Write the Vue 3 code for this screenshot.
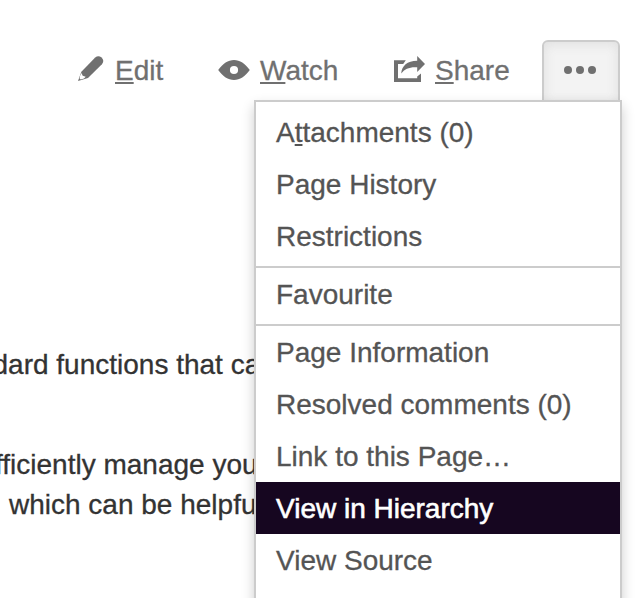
<script setup>
const actions = [
  { id: 'edit', key: 'E', rest: 'dit' },
  { id: 'watch', key: 'W', rest: 'atch' },
  { id: 'share', key: 'S', rest: 'hare' },
]
const sections = [
  [{ pre: 'A', key: 't', label: 'tachments (0)' }, { label: 'Page History' }, { label: 'Restrictions' }],
  [{ label: 'Favourite' }],
  [
    { label: 'Page Information' },
    { label: 'Resolved comments (0)' },
    { label: 'Link to this Page…' },
    { label: 'View in Hierarchy', active: true },
    { label: 'View Source' },
  ],
]
</script>

<template>
  <div class="page">
    <nav class="toolbar">
      <a v-for="a in actions" :key="a.id" class="action" :class="a.id">
        <svg v-if="a.id === 'edit'" class="icon" width="28" height="28" viewBox="0 0 28 28">
          <path d="M1 27L4.4 17.8L18.2 3.6Q21.3 0.8 24.6 3.6Q27.8 7 24.9 10.2L11 24Z" fill="#707070" />
          <path d="M3.1 21.7L4.5 18.9L5.7 21.7L8.7 22.8L7 24.6L3.7 25.5L2.6 24.4Z" fill="#fff" />
        </svg>
        <svg v-else-if="a.id === 'watch'" class="icon" width="32" height="22" viewBox="0 0 32 22">
          <path d="M0.2 11C5 4.5 10 1 16 1S27 4.5 31.8 11C27 17.5 22 21 16 21S5 17.5 0.2 11ZM16 6.9A4.1 4.1 0 1 0 16 15.1A4.1 4.1 0 1 0 16 6.9Z" fill="#707070" fill-rule="evenodd" />
        </svg>
        <svg v-else class="icon" width="32" height="28" viewBox="0 0 32 28">
          <path d="M11.8 4.2H0V26H27V17.6L23.2 20.6V22.2H4V8H9.2Z" fill="#707070" />
          <path d="M7.2 17.6C7.8 9.6 13 5 23.2 4.7V0L31 8L23.2 15.9V11.3C16 10.7 10.6 12.8 7.2 17.6Z" fill="#707070" />
        </svg>
        <span class="text"><span class="key">{{ a.key }}</span>{{ a.rest }}</span>
      </a>
      <button class="more" aria-label="More">
        <i></i><i></i><i></i>
      </button>
    </nav>

    <div class="content">
      <p class="first">dard functions that ca</p>
      <p class="second">fficiently manage you</p>
      <p class="third">which can be helpfu</p>
    </div>

    <div class="menu">
      <ul v-for="(s, i) in sections" :key="i">
        <li v-for="m in s" :key="m.label" :class="{ active: m.active }">{{ m.pre }}<span v-if="m.key" class="key">{{ m.key }}</span>{{ m.label }}</li>
      </ul>
    </div>
  </div>
</template>

<style>
body {
  margin: 0;
  background: #fff;
}
</style>

<style scoped>
.page {
  position: relative;
  width: 640px;
  height: 598px;
  overflow: hidden;
  font-family: "Liberation Sans", Arial, sans-serif;
  font-size: 28px;
  -webkit-text-stroke: 0.3px currentColor;
}
.toolbar {
  display: flex;
  box-sizing: border-box;
  height: 104px;
  padding: 40px 20px 0 77px;
  color: #707070;
}
.action {
  display: flex;
  align-items: center;
  height: 60px;
  line-height: 60px;
  white-space: nowrap;
}
.text {
  padding-top: 2px;
}
.icon {
  display: block;
  flex: none;
}
.edit {
  width: 141px;
  gap: 10px;
}
.edit .icon {
  margin-top: -4px;
}
.watch {
  width: 176px;
  gap: 10px;
}
.share {
  gap: 9px;
}
.share .icon {
  margin-top: -1px;
}
.key {
  text-decoration: underline;
  text-decoration-thickness: 2px;
  text-underline-offset: 2px;
  text-decoration-skip-ink: none;
}
.more {
  display: flex;
  align-items: center;
  justify-content: center;
  gap: 4px;
  box-sizing: border-box;
  width: 78px;
  height: 64px;
  margin: 0 0 0 auto;
  padding: 0 3px 4px 0;
  border: 2px solid #ccc;
  border-radius: 6px 6px 0 0;
  background: #f3f3f3;
  box-shadow: inset 0 2px 12px #dfdfdf;
}
.more i {
  width: 8px;
  height: 8px;
  border-radius: 50%;
  background: #707070;
}
.content {
  padding-top: 241px;
  color: #333;
  line-height: 40px;
  white-space: nowrap;
}
.content p {
  margin: 0;
}
.content .first {
  margin: 0 0 60px -7.5px;
}
.content .second {
  margin-left: -5px;
}
.content .third {
  margin-left: 9px;
}
.menu {
  position: absolute;
  top: 100px;
  left: 254px;
  box-sizing: border-box;
  width: 368px;
  height: 520px;
  padding-top: 4px;
  border: 2px solid #ccc;
  background: #fff;
  box-shadow: 0 6px 12px rgba(0, 0, 0, 0.2);
  color: #545454;
}
.menu ul {
  margin: 0;
  padding: 0;
  list-style: none;
}
.menu ul + ul {
  margin-top: 4px;
  border-top: 2px solid #ccc;
}
.menu li {
  box-sizing: border-box;
  height: 52px;
  padding: 1px 0 0 20px;
  line-height: 52px;
  white-space: nowrap;
}
.menu .active {
  background: #160620;
  color: #fff;
  -webkit-text-stroke: 0.6px #fff;
}
</style>
